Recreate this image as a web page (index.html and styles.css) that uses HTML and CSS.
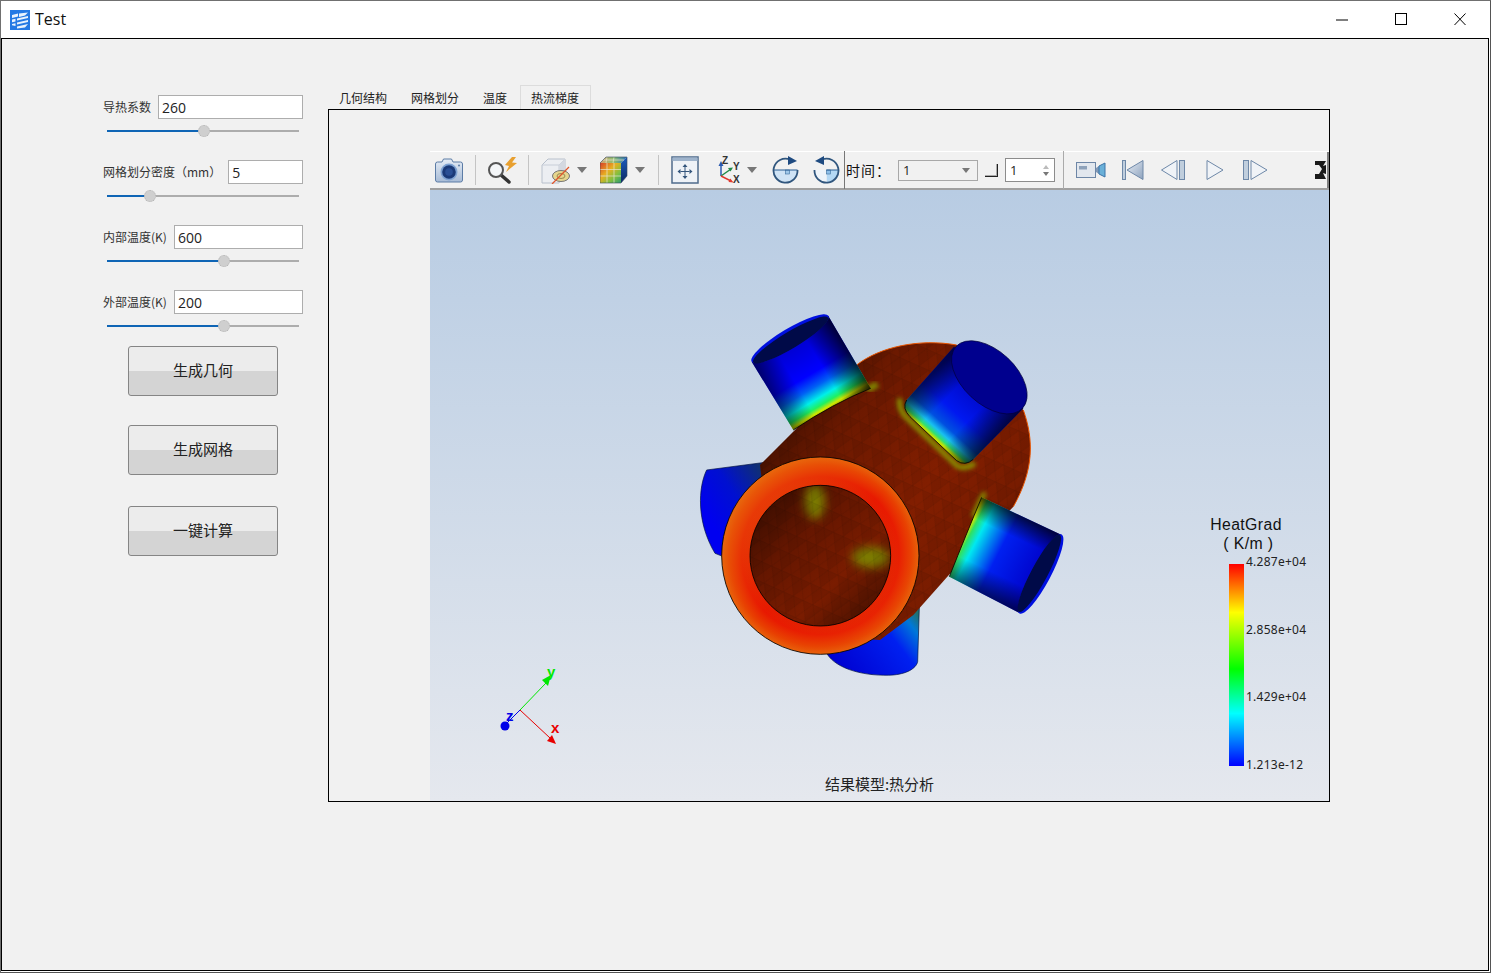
FILE: index.html
```html
<!DOCTYPE html>
<html lang="zh">
<head>
<meta charset="utf-8">
<title>Test</title>
<link rel="stylesheet" href="styles.css">
</head>
<body>
<svg class="defs" aria-hidden="true">
  <defs>
    <linearGradient id="camBody" x1="0" y1="0" x2="0" y2="1"><stop offset="0" stop-color="#e6edf6"/><stop offset="1" stop-color="#a7bbd6"/></linearGradient>
    <linearGradient id="barGrad" x1="0" y1="0" x2="1" y2="1"><stop offset="0" stop-color="#e8eef6"/><stop offset="1" stop-color="#8da2bd"/></linearGradient>
    <linearGradient id="cubeFront" x1="0" y1="0" x2="1" y2="1"><stop offset="0" stop-color="#d8402a"/><stop offset=".4" stop-color="#e8b020"/><stop offset=".7" stop-color="#80c040"/><stop offset="1" stop-color="#2c9a70"/></linearGradient>
    <linearGradient id="cubeTop" x1="0" y1="0" x2="1" y2="0"><stop offset="0" stop-color="#d8a070"/><stop offset=".5" stop-color="#90c070"/><stop offset="1" stop-color="#2a70b8"/></linearGradient>
    <linearGradient id="cubeSide" x1="0" y1="0" x2="0" y2="1"><stop offset="0" stop-color="#1c5cc0"/><stop offset="1" stop-color="#0c2a60"/></linearGradient>
  </defs>
</svg>

<div class="window">
  <header class="titlebar">
    <svg class="app-icon" width="20" height="20" viewBox="0 0 20 20">
      <rect width="20" height="20" fill="#2479e4"/>
      <path d="M2 5l6-1.500 0 3-6 1.500zM2 9.500l3.500-.8v2.800l-3.500.8zM2 14l3.500-.8v2.800l-3.500-.8zM9 3.500l9-1-3 3-6 1.500zM7 8.500l11-2.500v2l-11 2.500zM7 12.500l11-2.500v2l-11 2.500zM7 16.500l11-2.500-3 3.500-8 1z" fill="#e8f2fd"/>
    </svg>
    <span class="app-title">Test</span>
    <div class="win-controls">
      <svg width="14" height="14" viewBox="0 0 14 14" class="win-min"><path d="M0 7h12" stroke="#000" fill="none"/></svg>
      <svg width="14" height="14" viewBox="0 0 14 14" class="win-max"><rect x=".5" y=".5" width="11" height="11" stroke="#000" fill="none"/></svg>
      <svg width="14" height="14" viewBox="0 0 14 14" class="win-close"><path d="M.5.500l11 11.500M11.500.500l-11 11.500" stroke="#000" fill="none"/></svg>
    </div>
  </header>

  <main class="client">
    <aside class="side">
      <div class="field">
        <div class="field-row"><label class="field-label">导热系数</label><input class="field-input" value="260"></div>
        <div class="slider"><div class="slider-fill" style="width:97px"><span class="slider-thumb"></span></div></div>
      </div>
      <div class="field">
        <div class="field-row"><label class="field-label">网格划分密度（mm）</label><input class="field-input" value="5"></div>
        <div class="slider"><div class="slider-fill" style="width:43px"><span class="slider-thumb"></span></div></div>
      </div>
      <div class="field">
        <div class="field-row"><label class="field-label">内部温度(K)</label><input class="field-input" value="600"></div>
        <div class="slider"><div class="slider-fill" style="width:117px"><span class="slider-thumb"></span></div></div>
      </div>
      <div class="field field-last">
        <div class="field-row"><label class="field-label">外部温度(K)</label><input class="field-input" value="200"></div>
        <div class="slider"><div class="slider-fill" style="width:117px"><span class="slider-thumb"></span></div></div>
      </div>
      <button class="action">生成几何</button>
      <button class="action action-2">生成网格</button>
      <button class="action action-3">一键计算</button>
    </aside>

    <section class="workspace">
      <nav class="tabs">
        <span class="tab">几何结构</span>
        <span class="tab">网格划分</span>
        <span class="tab">温度</span>
        <span class="tab tab-active">热流梯度</span>
      </nav>
      <div class="tab-panel">
        <div class="viewer">
          <div class="toolbar">
            <svg class="m5" width="28" height="26" viewBox="0 0 28 26">
              <path d="M7 5l1.500-3h8l1.500 3h7.500q2 0 2 2v16q0 2-2 2h-23q-2 0-2-2v-16q0-2 2-2z" fill="url(#camBody)" stroke="#5c7ca6"/>
              <circle cx="14" cy="15" r="8.500" fill="#7ea2d2"/><circle cx="14" cy="15" r="6.800" fill="#1b3a78"/><circle cx="14" cy="15" r="3.800" fill="#2a4f95"/>
              <circle cx="24" cy="8.500" r="1" fill="#5c7ca6"/>
            </svg>
            <i class="sep m12"></i>
            <svg class="m12" width="30" height="28" viewBox="0 0 30 28">
              <path d="M13 19l8 7" stroke="#333" stroke-width="3.500" stroke-linecap="round"/>
              <circle cx="8" cy="14" r="7" fill="#f4f6f8" stroke="#555" stroke-width="2"/>
              <path d="M24 1L17 9l4 1-3 6 11-9-5-.5L28 1z" fill="#e8a030"/>
            </svg>
            <i class="sep m10"></i>
            <svg class="m12" width="30" height="28" viewBox="0 0 30 28">
              <path d="M1 9l6-6h17v17l-6 7h-17z" fill="#eceef2" stroke="#b8c0cc"/>
              <path d="M1 9h17v18M18 9l6-6" fill="none" stroke="#c8ced8"/>
              <path d="M18 9l6-6v17l-6 7z" fill="#d4d8e0"/>
              <ellipse cx="20" cy="20" rx="8.500" ry="5.500" fill="#e6d68e" stroke="#777"/>
              <ellipse cx="20" cy="20" rx="4" ry="2.500" fill="none" stroke="#998a50"/>
              <path d="M11 28l17-17" stroke="#e0562c" stroke-width="1.300"/>
            </svg>
            <i class="caret m6"></i>
            <svg class="m13" width="28" height="28" viewBox="0 0 28 28">
              <path d="M0 7l6-6h21l-6 6z" fill="url(#cubeTop)"/>
              <rect y="7" width="21" height="20" fill="url(#cubeFront)"/>
              <path d="M21 7l6-6v19l-6 7z" fill="url(#cubeSide)"/>
              <path d="M7 7v20M14 7v20M0 13.500h21M0 20h21M7 1l-1 6M14 1l-1 6M3 4h21" stroke="#e8e4d0" stroke-opacity=".7" fill="none"/>
              <path d="M0 7v20h21l6-7V1H6z" fill="none" stroke="#34465e" stroke-opacity=".6"/>
            </svg>
            <i class="caret m7"></i>
            <i class="sep m13"></i>
            <svg class="m12" width="28" height="28" viewBox="0 0 28 28">
              <rect x="1" y="1" width="26" height="26" fill="#eef2f7" stroke="#4f6b8c" stroke-width="1.500"/>
              <rect x="1.500" y="1.500" width="25" height="3.500" fill="#9fb4cc"/>
              <path d="M14 11v9M9.500 15.500h9" stroke="#33557c"/>
              <path d="M14 8l-2.500 3h5zM14 23l-2.500-3h5zM6.500 15.500l3-2.500v5zM21.500 15.500l-3-2.500v5z" fill="#33557c"/>
            </svg>
            <svg class="m17" width="26" height="28" viewBox="0 0 26 28">
              <path d="M5 20v-12" stroke="#2a5ab0" stroke-width="1.500"/><path d="M5 5l-2.500 5h5z" fill="#2a5ab0"/>
              <path d="M5 20l10-7" stroke="#208a48" stroke-width="1.500"/><path d="M17 11.500l-5 .5 2.500 3.500z" fill="#208a48"/>
              <path d="M5 20l10 5" stroke="#e03a30" stroke-width="1.500"/><path d="M17.500 26.500l-5-.5 1.800-3.500z" fill="#e03a30"/>
              <text x="6" y="8" class="ax">Z</text><text x="17" y="14" class="ax">Y</text><text x="17" y="27" class="ax">X</text>
            </svg>
            <i class="caret m5"></i>
            <svg class="m15" width="27" height="28" viewBox="0 0 27 28">
              <path d="M1.500 14a12 12 0 0 0 24 0z" fill="#cfe3f5"/>
              <rect x="13.500" y="14" width="4" height="4" fill="#a0c8ea" stroke="#3a6d9c" stroke-width=".6"/>
              <path d="M1.500 14h24" stroke="#2a5f94"/>
              <path d="M18 3.500A12 12 0 1 0 25.500 14" fill="none" stroke="#30567e" stroke-width="1.800"/>
              <path d="M16 0l9 5-9 4z" fill="#1e4a80"/>
            </svg>
            <svg class="m14" width="27" height="28" viewBox="0 0 27 28">
              <path d="M13.500 14v12a12 12 0 0 0 12-12z" fill="#b4d8f4"/>
              <path d="M1.500 14a12 12 0 0 0 12 12V14z" fill="#eef4fa"/>
              <rect x="13.500" y="14" width="4" height="4" fill="#8fc0ea" stroke="#3a6d9c" stroke-width=".6"/>
              <path d="M13.500 14h12" stroke="#2a5f94"/>
              <path d="M9 3.500A12 12 0 1 1 1.500 14" fill="none" stroke="#30567e" stroke-width="1.800"/>
              <path d="M11 0L2 5l9 4z" fill="#1e4a80"/>
            </svg>
            <i class="divider m4"></i>
            <span class="time-label">时间：</span>
            <div class="combo"><span>1</span><i class="combo-caret"></i></div>
            <span class="check"></span>
            <div class="spin"><span>1</span><span class="spin-arrows"><i class="up"></i><i class="down"></i></span></div>
            <i class="divider divider-light m8"></i>
            <div class="toolbar-play">
              <svg class="m5" width="30" height="18" viewBox="0 0 30 18">
                <rect x=".5" y="1.500" width="19" height="15" fill="#e2e7ee" stroke="#6d86a6"/>
                <rect x="3" y="5" width="8" height="3.500" fill="#8ea2ba"/>
                <path d="M20 7l3-2v8l-3-2z" fill="#8099b8"/>
                <path d="M23 5l6-3v14l-6-3z" fill="#6ab0d8" stroke="#3c74a8"/>
              </svg>
              <svg class="m16" width="22" height="22" viewBox="0 0 22 22">
                <rect x=".5" y="1.500" width="3" height="19" fill="#c0cedd" stroke="#6e88a8"/>
                <path d="M21 1.500v19l-16-9.500z" fill="url(#barGrad)" stroke="#6e88a8"/>
              </svg>
              <svg class="m17" width="25" height="22" viewBox="0 0 25 22">
                <path d="M16 1.500v19l-15.500-9.500z" fill="#f0f3f7" stroke="#6e88a8"/>
                <rect x="18.500" y="1.500" width="5" height="19" fill="#c0cedd" stroke="#6e88a8"/>
              </svg>
              <svg class="m20" width="18" height="22" viewBox="0 0 18 22">
                <path d="M1 1.500v19l16-9.500z" fill="#f0f3f7" stroke="#6e88a8"/>
              </svg>
              <svg class="m19" width="25" height="22" viewBox="0 0 25 22">
                <rect x=".5" y="1.500" width="5" height="19" fill="#c0cedd" stroke="#6e88a8"/>
                <path d="M8 1.500v19l16-9.500z" fill="#f0f3f7" stroke="#6e88a8"/>
              </svg>
              <svg class="overflow" width="11" height="18" viewBox="0 0 11 18">
                <rect width="11" height="18" fill="#1a1a1a"/>
                <path d="M0 4h4l3 4-3 5H0zM11 0v4l-3 1zM11 18v-5l-3-1z" fill="#eee"/>
              </svg>
            </div>
          </div>
          <div class="scene">
            <svg class="model" width="899" height="611" viewBox="0 0 899 611">
              <defs>
                <linearGradient id="tlAxis" gradientUnits="userSpaceOnUse" x1="330" y1="116" x2="455" y2="328">
                  <stop offset="0" stop-color="#0000c8"/><stop offset=".5" stop-color="#0000ff"/><stop offset=".66" stop-color="#0060f4"/><stop offset=".8" stop-color="#00f0e8"/><stop offset=".89" stop-color="#20f060"/><stop offset=".95" stop-color="#d0e800"/><stop offset="1" stop-color="#8a8a00"/>
                </linearGradient>
                <linearGradient id="tlSide" gradientUnits="userSpaceOnUse" x1="215" y1="185" x2="445" y2="48">
                  <stop offset="0" stop-color="#000" stop-opacity=".5"/><stop offset=".3" stop-color="#000" stop-opacity="0"/><stop offset=".65" stop-color="#000" stop-opacity="0"/><stop offset="1" stop-color="#000" stop-opacity=".75"/>
                </linearGradient>
                <linearGradient id="trAxis" gradientUnits="userSpaceOnUse" x1="930" y1="232" x2="765" y2="415">
                  <stop offset="0" stop-color="#0000b0"/><stop offset=".6" stop-color="#0018f0"/><stop offset=".8" stop-color="#0050e0"/><stop offset=".9" stop-color="#18c0f0"/><stop offset=".96" stop-color="#30e070"/><stop offset="1" stop-color="#c8e000"/>
                </linearGradient>
                <linearGradient id="trSide" gradientUnits="userSpaceOnUse" x1="680" y1="300" x2="870" y2="490">
                  <stop offset="0" stop-color="#000" stop-opacity=".6"/><stop offset=".3" stop-color="#000" stop-opacity="0"/><stop offset=".65" stop-color="#000" stop-opacity="0"/><stop offset="1" stop-color="#000" stop-opacity=".7"/>
                </linearGradient>
                <linearGradient id="rAxis" gradientUnits="userSpaceOnUse" x1="855" y1="705" x2="1082" y2="822">
                  <stop offset="0" stop-color="#d8e800"/><stop offset=".05" stop-color="#30e060"/><stop offset=".15" stop-color="#00e8f0"/><stop offset=".28" stop-color="#0090f0"/><stop offset=".45" stop-color="#0020f0"/><stop offset="1" stop-color="#0000c8"/>
                </linearGradient>
                <linearGradient id="rSide" gradientUnits="userSpaceOnUse" x1="960" y1="620" x2="850" y2="855">
                  <stop offset="0" stop-color="#000" stop-opacity=".7"/><stop offset=".25" stop-color="#000" stop-opacity="0"/><stop offset=".72" stop-color="#000" stop-opacity="0"/><stop offset="1" stop-color="#000" stop-opacity=".55"/>
                </linearGradient>
                <linearGradient id="lTube" gradientUnits="userSpaceOnUse" x1="60" y1="620" x2="240" y2="500">
                  <stop offset="0" stop-color="#0000f0"/><stop offset=".5" stop-color="#0010d0"/><stop offset="1" stop-color="#103070"/>
                </linearGradient>
                <linearGradient id="bTube" gradientUnits="userSpaceOnUse" x1="480" y1="1120" x2="710" y2="940">
                  <stop offset="0" stop-color="#0000d0"/><stop offset=".65" stop-color="#0020f0"/><stop offset=".88" stop-color="#0078d8"/><stop offset="1" stop-color="#207070"/>
                </linearGradient>
                <linearGradient id="bodyFill" gradientUnits="userSpaceOnUse" x1="280" y1="300" x2="1000" y2="800">
                  <stop offset="0" stop-color="#3a0e00"/><stop offset=".25" stop-color="#6c1900"/><stop offset=".6" stop-color="#821e00"/><stop offset=".85" stop-color="#781c00"/><stop offset="1" stop-color="#461000"/>
                </linearGradient>
                <radialGradient id="ringFill">
                  <stop offset=".713" stop-color="#e41800"/><stop offset=".8" stop-color="#e81400"/><stop offset=".92" stop-color="#e83c00"/><stop offset="1" stop-color="#e8600a"/>
                </radialGradient>
                <linearGradient id="ringTint" x1="0" y1="0" x2="1" y2="1">
                  <stop offset="0" stop-color="#e87010" stop-opacity=".7"/><stop offset=".5" stop-color="#e87010" stop-opacity=".05"/><stop offset="1" stop-color="#e87010" stop-opacity=".25"/>
                </linearGradient>
                <linearGradient id="holeFill" x1="0" y1="0" x2="1" y2="1">
                  <stop offset="0" stop-color="#2a0a00"/><stop offset=".35" stop-color="#641600"/><stop offset=".65" stop-color="#7a1c00"/><stop offset="1" stop-color="#360d00"/>
                </linearGradient>
                <pattern id="mesh" patternUnits="userSpaceOnUse" width="64" height="56" patternTransform="rotate(24)">
                  <path d="M0 0l32 56L64 0zM0 56l32-56 32 56" fill="none" stroke="#000" stroke-opacity=".1" stroke-width="2"/>
                  <path d="M0 0l32 56L64 0z" fill="#000" fill-opacity=".06"/>
                </pattern>
                <filter id="blur8" x="-40%" y="-40%" width="180%" height="180%"><feGaussianBlur stdDeviation="7"/></filter>
                <filter id="blur14" x="-60%" y="-60%" width="220%" height="220%"><feGaussianBlur stdDeviation="14"/></filter>
                <clipPath id="holeClip"><circle cx="421" cy="767" r="210"/></clipPath>
              </defs>
              <g transform="translate(250 110) scale(.33333)">
                <!-- tubes behind the body -->
                <path d="M255 487L80 510C55 560 48 665 105 760L135 772L260 600Z" fill="url(#lTube)" stroke="#001040" stroke-width="2"/>
                <path d="M440 1060C470 1110 560 1130 640 1125C690 1120 710 1100 713 1085L718 920L620 1000Z" fill="url(#bTube)" stroke="#001040" stroke-width="2"/>
                <!-- body -->
                <path d="M240 495L345 390C400 330 470 250 530 195C600 140 720 115 830 135L1030 330C1062 420 1062 510 1000 620L820 810L700 945L600 1020L300 1000Z" fill="url(#bodyFill)"/>
                <path d="M240 495L345 390C400 330 470 250 530 195C600 140 720 115 830 135L1030 330C1062 420 1062 510 1000 620L820 810L700 945L600 1020L300 1000Z" fill="url(#mesh)"/>
                <path d="M530 195C600 140 720 115 830 135M1030 330C1062 420 1062 510 1000 620" fill="none" stroke="#e85400" stroke-width="3"/>
                <!-- glow at the tube roots -->
                <path d="M560 268Q580 262 592 252" fill="none" stroke="#808400" stroke-width="20" filter="url(#blur8)"/>
                <path d="M660 295Q652 325 682 355L832 498Q855 510 885 490" fill="none" stroke="#888c00" stroke-width="16" filter="url(#blur8)"/>
                <path d="M915 578Q900 600 880 650" fill="none" stroke="#808400" stroke-width="16" filter="url(#blur8)"/>
                <!-- top-left tube -->
                <path d="M215 185L340 390Q460 310 572 265L445 48Z" fill="url(#tlAxis)"/>
                <path d="M215 185L340 390Q460 310 572 265L445 48Z" fill="url(#tlSide)"/>
                <path d="M340 390Q460 310 572 265" fill="none" stroke="#000" stroke-width="2.500"/>
                <ellipse cx="330" cy="116" rx="134" ry="30" transform="rotate(-30.800 330 116)" fill="#0010e0"/>
                <ellipse cx="332" cy="120" rx="131" ry="25" transform="rotate(-30.800 332 120)" fill="#000a48"/>
                <!-- top-right tube -->
                <path d="M822 140L680 300Q665 325 690 350L830 482Q855 500 880 478L1030 325Z" fill="url(#trAxis)"/>
                <path d="M822 140L680 300Q665 325 690 350L830 482Q855 500 880 478L1030 325Z" fill="url(#trSide)"/>
                <path d="M680 300Q665 325 690 350L830 482Q855 500 880 478" fill="none" stroke="#000" stroke-width="2.500"/>
                <ellipse cx="928" cy="232" rx="136" ry="80" transform="rotate(43 928 232)" fill="#00008e" stroke="#00003a" stroke-width="2"/>
                <!-- right tube -->
                <path d="M905 592Q860 700 808 830L1020 940L1145 705Z" fill="url(#rAxis)"/>
                <path d="M905 592Q860 700 808 830L1020 940L1145 705Z" fill="url(#rSide)"/>
                <path d="M905 592Q860 700 808 830" fill="none" stroke="#000" stroke-width="2.500"/>
                <ellipse cx="1082" cy="822" rx="134" ry="30" transform="rotate(-62 1082 822)" fill="#0010e0"/>
                <ellipse cx="1078" cy="820" rx="131" ry="25" transform="rotate(-62 1078 820)" fill="#000a48"/>
                <!-- front ring and hole -->
                <circle cx="421" cy="767" r="296" fill="url(#ringFill)"/>
                <circle cx="421" cy="767" r="296" fill="url(#ringTint)" stroke="#000" stroke-width="2.500"/>
                <circle cx="421" cy="767" r="211" fill="url(#holeFill)"/>
                <g clip-path="url(#holeClip)">
                  <ellipse cx="405" cy="605" rx="30" ry="52" fill="#7c7c00" filter="url(#blur14)"/>
                  <ellipse cx="572" cy="772" rx="56" ry="32" fill="#7c7c00" filter="url(#blur14)"/>
                  <circle cx="421" cy="767" r="211" fill="url(#mesh)"/>
                </g>
                <circle cx="421" cy="767" r="211" fill="none" stroke="#000" stroke-width="2.500"/>
              </g>
              <!-- orientation triad -->
              <g transform="translate(-430 -190)">
                <path d="M520 710L546 683" stroke="#00e800" fill="none"/>
                <path d="M551 675l-9 5 6 6z" fill="#00e800"/>
                <path d="M520 710L550 738" stroke="#e80000" fill="none"/>
                <path d="M556 744l-9-3 5-6z" fill="#e80000"/>
                <path d="M520 710L507 723" stroke="#0000e8" fill="none"/>
                <circle cx="505" cy="726" r="4.500" fill="#0000e8"/>
                <text x="547" y="677" class="triad triad-y">y</text>
                <text x="551" y="733" class="triad triad-x">x</text>
                <text x="506" y="721" class="triad triad-z">z</text>
              </g>
            </svg>
            <div class="legend">
              <div class="legend-title">HeatGrad<br>&nbsp;(&nbsp;K/m&nbsp;)</div>
              <div class="legend-body">
                <div class="legend-bar"></div>
                <div class="legend-ticks"><span>4.287e+04</span><span>2.858e+04</span><span>1.429e+04</span><span>1.213e-12</span></div>
              </div>
            </div>
            <div class="caption">结果模型:热分析</div>
          </div>
        </div>
      </div>
    </section>
  </main>
</div>
</body>
</html>
```

FILE: styles.css
```css
* { box-sizing: border-box; }
html, body { margin: 0; padding: 0; width: 1491px; height: 973px; overflow: hidden; background: #f1f1f1; }
body { font-family: "Noto Sans CJK SC", "Noto Sans", sans-serif; color: #222; }
.defs { position: absolute; width: 0; height: 0; }

.window { width: 1491px; height: 973px; padding-right: 1px; padding-bottom: 1px; border: 1px solid #707070; border-right-color: #555; border-bottom-color: #555; background: #fff; display: flex; flex-direction: column; }
.titlebar { height: 37px; flex: none; display: flex; align-items: center; padding-left: 9px; background: #fff; }
.app-icon { display: block; }
.app-title { margin: -2px 0 0 5px; font: 16px/20px "Open Sans", sans-serif; color: #111; }
.win-controls { margin-left: auto; display: flex; align-items: center; }
.win-min { margin-right: 45px; }
.win-max { margin-right: 45px; }
.win-close { margin-right: 21px; }

.client { flex: 1; display: flex; border: 1px solid #000; background: #f1f1f1; padding: 46px 0 0 101px; }
.side { width: 200px; flex: none; padding-top: 10px; display: flex; flex-direction: column; }
.field { height: 65px; }
.field-last { height: 56px; }
.field-row { height: 24px; display: flex; align-items: center; gap: 7px; }
.field-label { font-size: 12px; line-height: 24px; white-space: nowrap; color: #333; flex: none; }
.field-input { flex: 1; min-width: 0; height: 24px; border: 1px solid #adadad; background: #fff; padding: 1px 3px 0; font: 14px "Open Sans", sans-serif; color: #222; border-radius: 0; outline: 0; }
.slider { margin: 11px 4px 0; height: 2px; background: #adadad; }
.slider-fill { position: relative; height: 2px; background: #0f65b5; }
.slider-thumb { position: absolute; right: -6px; top: -5px; width: 12px; height: 12px; border-radius: 50%; background: #cfcfcf; border: 1px dotted #b5b5b5; }
.action { width: 150px; height: 50px; margin: 0 0 0 25px; padding: 0 0 3px; flex: none; border: 1px solid #858585; border-radius: 3px; background: linear-gradient(#ececec 0, #ececec 50%, #d4d4d4 50%, #d4d4d4 100%); font: 15px "Noto Sans CJK SC", sans-serif; color: #222; }
.action-2 { margin-top: 29px; }
.action-3 { margin-top: 31px; }

.workspace { margin-left: 25px; width: 1002px; flex: none; }
.tabs { height: 24px; display: flex; gap: 1px; }
.tab { height: 24px; padding: 0 12px 0 11px; font-size: 12px; line-height: 26px; color: #222; }
.tab-active { border: 1px solid #dcdcdc; border-bottom: 0; padding: 0 11px 0 10px; line-height: 24px; background: #f1f1f1; }
.tab-panel { width: 1002px; height: 693px; border: 1px solid #000; background: #f1f1f1; padding: 41px 0 0 101px; }
.viewer { width: 899px; height: 650px; display: flex; flex-direction: column; }

.toolbar { height: 39px; flex: none; display: flex; align-items: center; background: #f1f1f1; border-top: 1px solid #fff; border-bottom: 2px solid #a0a0a0; }
.toolbar svg { display: block; flex: none; }
.ax { font: 700 10px "Liberation Sans", sans-serif; fill: #333; }
.m4 { margin-left: 4px; } .m5 { margin-left: 5px; } .m6 { margin-left: 6px; } .m7 { margin-left: 7px; } .m8 { margin-left: 8px; }
.m10 { margin-left: 10px; } .m12 { margin-left: 12px; } .m13 { margin-left: 13px; } .m14 { margin-left: 14px; } .m15 { margin-left: 15px; }
.m16 { margin-left: 16px; } .m17 { margin-left: 17px; } .m19 { margin-left: 19px; } .m20 { margin-left: 20px; }
.sep { display: block; width: 1px; height: 30px; background: #c4c4c4; flex: none; }
.caret { display: block; flex: none; width: 0; height: 0; border-left: 5px solid transparent; border-right: 5px solid transparent; border-top: 6px solid #777; }
.divider { display: block; flex: none; width: 1px; height: 38px; background: #777; }
.divider-light { background: #aaa; }
.time-label { width: 45px; margin: 0 -7px 0 1px; flex: none; font-size: 14px; line-height: 20px; letter-spacing: 1px; white-space: nowrap; color: #111; }
.combo { width: 80px; height: 21px; margin-left: 14px; flex: none; border: 1px solid #a8a8a8; display: flex; align-items: center; justify-content: space-between; padding: 0 7px 0 4px; font: 13px "Open Sans", sans-serif; color: #222; }
.combo-caret { width: 0; height: 0; border-left: 4px solid transparent; border-right: 4px solid transparent; border-top: 5px solid #777; }
.check { width: 13px; height: 13px; margin-left: 7px; flex: none; border-right: 1px solid #222; border-bottom: 1px solid #222; box-shadow: inset -1px -1px 0 #aaa; }
.spin { width: 50px; height: 24px; margin-left: 7px; flex: none; border: 1px solid #8c8c8c; background: #fff; display: flex; align-items: center; justify-content: space-between; padding: 0 5px 0 4px; font: 13px "Open Sans", sans-serif; color: #222; }
.spin-arrows { display: flex; flex-direction: column; gap: 3px; }
.spin-arrows .up { width: 0; height: 0; border-left: 3px solid transparent; border-right: 3px solid transparent; border-bottom: 4px solid #bbb; }
.spin-arrows .down { width: 0; height: 0; border-left: 3px solid transparent; border-right: 3px solid transparent; border-top: 4px solid #777; }
.toolbar-play { flex: 1; height: 36px; margin-left: 7px; display: flex; align-items: center; border-right: 2px solid #808080; }
.overflow { margin-left: auto; margin-right: 1px; }

.scene { position: relative; flex: 1; background: linear-gradient(#b8cce3, #e5e8ee); overflow: hidden; }
.model { position: absolute; left: 0; top: 0; display: block; }
.triad { font: 700 15px "Liberation Sans", sans-serif; }
.triad-x { fill: #e80000; } .triad-y { fill: #00e800; } .triad-z { fill: #0000e8; }

.legend { position: absolute; left: 780px; top: 326px; width: 110px; }
.legend-title { width: 72px; text-align: center; font: 15.800px/18.500px "Liberation Sans", sans-serif; letter-spacing: .4px; color: #111; white-space: nowrap; }
.legend-body { display: flex; margin: 11px 0 0 19px; }
.legend-bar { width: 15px; height: 202px; flex: none; background: linear-gradient(#ff0000 0, #ffff00 24%, #00ff00 52%, #00ffff 74%, #0000ff 100%); }
.legend-ticks { height: 219px; margin: -10px 0 0 2px; display: flex; flex-direction: column; justify-content: space-between; font: 12px/16px "Noto Sans", sans-serif; letter-spacing: .25px; color: #222; white-space: nowrap; }

.caption { position: absolute; left: 0; right: 0; bottom: 6px; text-align: center; font-size: 15px; line-height: 22px; color: #222; }
```
